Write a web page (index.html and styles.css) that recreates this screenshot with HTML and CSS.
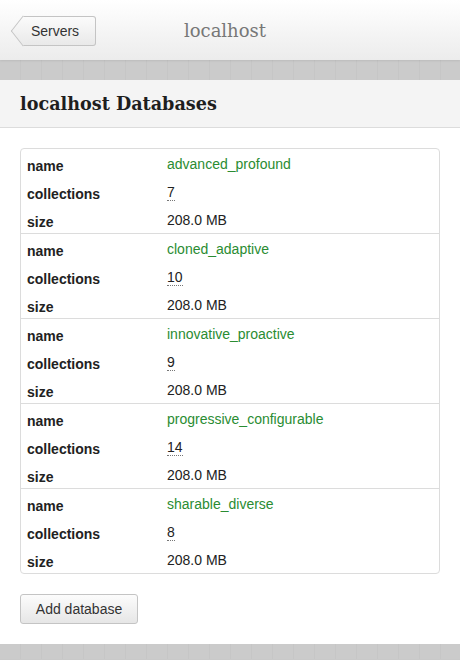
FILE: index.html
```html
<!DOCTYPE html>
<html>
<head>
<meta charset="utf-8">
<link rel="stylesheet" href="styles.css">
</head>
<body>
<header class="topbar">
  <button class="back-btn">Servers</button>
  <h1 class="title">localhost</h1>
</header>
<div class="band"></div>
<section class="page">
  <div class="page-head"><h2>localhost Databases</h2></div>
  <div class="content">
    <div class="card">
      <div class="group">
        <div class="row"><span class="label">name</span><a class="val name">advanced_profound</a></div>
        <div class="row"><span class="label">collections</span><span class="val"><abbr>7</abbr></span></div>
        <div class="row"><span class="label">size</span><span class="val">208.0 MB</span></div>
      </div>
      <div class="group">
        <div class="row"><span class="label">name</span><a class="val name">cloned_adaptive</a></div>
        <div class="row"><span class="label">collections</span><span class="val"><abbr>10</abbr></span></div>
        <div class="row"><span class="label">size</span><span class="val">208.0 MB</span></div>
      </div>
      <div class="group">
        <div class="row"><span class="label">name</span><a class="val name">innovative_proactive</a></div>
        <div class="row"><span class="label">collections</span><span class="val"><abbr>9</abbr></span></div>
        <div class="row"><span class="label">size</span><span class="val">208.0 MB</span></div>
      </div>
      <div class="group">
        <div class="row"><span class="label">name</span><a class="val name">progressive_configurable</a></div>
        <div class="row"><span class="label">collections</span><span class="val"><abbr>14</abbr></span></div>
        <div class="row"><span class="label">size</span><span class="val">208.0 MB</span></div>
      </div>
      <div class="group">
        <div class="row"><span class="label">name</span><a class="val name">sharable_diverse</a></div>
        <div class="row"><span class="label">collections</span><span class="val"><abbr>8</abbr></span></div>
        <div class="row"><span class="label">size</span><span class="val">208.0 MB</span></div>
      </div>
    </div>
    <button class="add-btn">Add database</button>
  </div>
</section>
<div class="band band-bottom"></div>
</body>
</html>
```
FILE: styles.css
```css
* { box-sizing: border-box; }
html, body { margin: 0; padding: 0; }
body {
  width: 460px;
  height: 660px;
  overflow: hidden;
  background: #c9c9c9;
  font-family: "Liberation Sans", Arial, sans-serif;
  font-size: 14px;
  color: #222;
}
.topbar {
  height: 60px;
  display: flex;
  align-items: center;
  padding: 0 0 0 11px;
  background: linear-gradient(#ffffff, #ececec);
  box-shadow: 0 1px 2px rgba(0,0,0,0.08);
  position: relative;
  z-index: 1;
}
.back-btn {
  position: relative;
  z-index: 0;
  isolation: isolate;
  height: 30px;
  width: 73px;
  margin: 1px 0 0 12px;
  padding: 0 8px 0 0;
  font-family: "Liberation Sans", Arial, sans-serif;
  font-size: 14px;
  color: #333;
  background: linear-gradient(#fbfbfb, #e9e9e9);
  border: 1px solid #c4c4c4;
  border-left: none;
  border-radius: 0 3px 3px 0;
}
.back-btn::before {
  content: "";
  position: absolute;
  left: -11px;
  top: 3.5px;
  width: 21px;
  height: 21px;
  background: linear-gradient(to bottom right, #fbfbfb, #e9e9e9);
  border-left: 1px solid #c4c4c4;
  border-bottom: 1px solid #c4c4c4;
  transform: scaleX(0.78) rotate(45deg);
  z-index: -1;
}
.title {
  flex: 1;
  margin: 0;
  text-align: center;
  font-family: "DejaVu Serif", serif;
  font-weight: normal;
  font-size: 18px;
  color: #777;
  padding-right: 106px;
}
.band {
  height: 20px;
  background: repeating-linear-gradient(90deg, #cbcbcb 0 20px, #c6c6c6 20px 21px);
}
.page { background: #fff; }
.page-head {
  height: 48px;
  background: #f4f4f4;
  border-bottom: 1px solid #dcdcdc;
  display: flex;
  align-items: center;
  padding: 0 20px;
}
.page-head h2 {
  margin: 0;
  font-family: "DejaVu Serif", serif;
  font-weight: bold;
  font-size: 17.6px;
  color: #1e1e1e;
}
.content { padding: 20px; }
.card {
  border: 1px solid #dcdcdc;
  border-radius: 4px;
  background: #fff;
}
.group + .group { border-top: 1px solid #dcdcdc; }
.row {
  height: 28px;
  display: grid;
  grid-template-columns: 140px 1fr;
  align-items: center;
  padding-left: 6px;
}
.label { font-weight: bold; color: #222; padding-top: 6px; }
.val { color: #222; padding-top: 2px; }
.name { color: #2a8c32; text-decoration: none; }
abbr {
  text-decoration: none;
  border-bottom: 1px dotted #777;
}
.add-btn {
  margin-top: 20px;
  height: 30px;
  width: 118px;
  font-family: "Liberation Sans", Arial, sans-serif;
  font-size: 14px;
  color: #333;
  background: linear-gradient(#fcfcfc, #e6e6e6);
  border: 1px solid #c4c4c4;
  border-radius: 3px;
}
.band-bottom { height: 15px; }
```
